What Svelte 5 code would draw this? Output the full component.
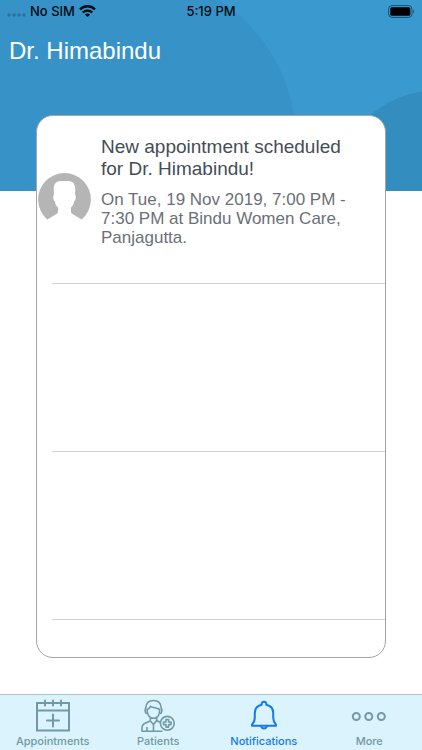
<script lang="ts">
  type Tab = "appointments" | "patients" | "notifications" | "more";

  const tabs: { id: Tab; label: string }[] = [
    { id: "appointments", label: "Appointments" },
    { id: "patients", label: "Patients" },
    { id: "notifications", label: "Notifications" },
    { id: "more", label: "More" },
  ];

  const notifications = [
    {
      title: "New appointment scheduled for Dr. Himabindu!",
      body: "On Tue, 19 Nov 2019, 7:00 PM - 7:30 PM at Bindu Women Care, Panjagutta.",
    },
    null,
    null,
  ];

  let active: Tab = $state("notifications");
</script>

<div class="app">
  <header>
    <svg class="backdrop" viewBox="0 0 422 191" preserveAspectRatio="xMaxYMin slice" aria-hidden="true">
      <path d="M0 0H219A166 166 0 0 1 288 191H0Z" fill="#3793c7" />
      <circle cx="440" cy="200" r="110" fill="#338dbe" />
    </svg>

    <div class="status">
      <div class="carrier">
        <svg width="19" height="12" viewBox="0 0 19 12" fill="#2c729b">
          <circle cx="2" cy="10" r="1.8" />
          <circle cx="7" cy="10" r="1.8" />
          <circle cx="12" cy="10" r="1.8" />
          <circle cx="17" cy="10" r="1.8" />
        </svg>
        <span>No SIM</span>
        <svg width="17" height="12" viewBox="0 0 17 12" fill="none" stroke="#050b10" stroke-width="2.3">
          <path d="M1 4.400C5.200.2 11.800.2 16 4.400" />
          <path d="M3.700 7.500c2.700-2.600 6.900-2.600 9.600 0" />
          <path d="M5.900 9.500c1.600-1.400 3.600-1.400 5.200 0L8.500 12Z" fill="#050b10" stroke="none" />
        </svg>
      </div>
      <time>5:19 PM</time>
      <svg class="battery" width="27" height="13" viewBox="0 0 27 13">
        <rect x=".6" y=".6" width="23.4" height="11.8" rx="3.5" fill="none" stroke="#1d4d69" />
        <rect x="2.3" y="2.3" width="20" height="8.4" rx="1.5" fill="#000" />
        <path d="M25.300 4.500v4c1.200-.5 1.200-3.500 0-4Z" fill="#1d4d69" />
      </svg>
    </div>

    <h1>Dr. Himabindu</h1>
  </header>

  <main>
    <ul>
      {#each notifications as item}
        <li>
          {#if item}
            <svg class="avatar" viewBox="0 0 53 53" aria-hidden="true">
              <path
                fill="#b5b5b5"
                d="M9.3 46.500A26.400 26.400 0 1 1 43.700 46.500L34.500 41C33 40 32.500 37.500 33 34.500C34.800 33 35.800 31 36 28.500C38 27.500 38.200 23 37 21C37.700 14 37.500 8 30 8H23C15.500 8 15.300 14 16 21C14.800 23 15 27.500 17 28.500C17.200 31 18.200 33 20 34.500C20.500 37.500 20 40 18.500 41Z"
              />
            </svg>
            <div class="text">
              <h2>{item.title}</h2>
              <p>{item.body}</p>
            </div>
          {/if}
        </li>
      {/each}
    </ul>
  </main>

  <nav>
    {#each tabs as tab}
      <button class:active={active === tab.id} onclick={() => (active = tab.id)}>
        <svg width="36" height="36" viewBox="0 0 36 36" fill="none" stroke="currentColor" stroke-width="2" aria-hidden="true">
          {#if tab.id === "appointments"}
            <path d="M2 5H34V32.500H2ZM2 12.500H34" />
            <path d="M10 2.500V7.500M18 2.500V7.500M26 2.500V7.500M18 16.500V28.500M12 22.500H24" stroke-linecap="round" />
          {:else if tab.id === "patients"}
            <g stroke-width="1.6" stroke-linejoin="round">
              <path d="M6.500 16C4.500 13.500 5 11.500 5.800 10C6 5 9 2.500 13.500 2.500S21 5 21.200 10C22 11.500 22.500 13.500 20.500 16" />
              <path d="M7.200 11.500C8.800 11 10 9.500 10.500 8.300C13 10 17 9.500 19.600 11.500C20 17 17.500 20.300 13.500 20.300S7 17 7.200 11.500Z" />
              <path d="M10.300 20V23L5.500 25C3 26 2 27.500 2 30V33.200H22.500M16.700 20V22.500L20.500 24.500M10.300 23L13.500 26.500L16.700 22.500M13.500 26.500V33M7 29V33" />
              <circle cx="27.300" cy="25.300" r="6.900" />
              <path d="M26 21.500h2.600v2.500h2.500v2.600h-2.500v2.500H26v-2.500h-2.500V24H26Z" />
            </g>
          {:else if tab.id === "notifications"}
            <path d="M15.700 6.800A2.400 2.400 0 1 1 20.300 6.800C25 7.800 27.200 11 27.200 15V19.500C27.200 22.500 28 24.500 30 26.700V27.800H6V26.700C8 24.500 8.800 22.500 8.800 19.500V15C8.800 11 11 7.800 15.700 6.800Z" stroke-linejoin="round" />
            <path d="M15 28.300a3.100 2.800 0 0 0 6 0" />
          {:else}
            <circle cx="5.300" cy="18.500" r="3.500" />
            <circle cx="17.800" cy="18.500" r="3.500" />
            <circle cx="30.300" cy="18.500" r="3.500" />
          {/if}
        </svg>
        <span>{tab.label}</span>
      </button>
    {/each}
  </nav>
</div>

<style>
  :global(body) {
    margin: 0;
    background: #fff;
  }
  .app {
    min-height: 100vh;
    display: flex;
    flex-direction: column;
    font-family: "Liberation Sans", Arial, sans-serif;
  }
  header {
    position: relative;
    height: 191px;
    background: #3a9acf;
    color: #fff;
  }
  .backdrop {
    position: absolute;
    inset: 0;
    width: 100%;
    height: 100%;
  }
  .status {
    position: relative;
    display: grid;
    grid-template-columns: 1fr auto 1fr;
    align-items: center;
    height: 22px;
    padding: 0 7px;
    color: #050b10;
    font: 500 13px/22px Inter, sans-serif;
  }
  .carrier {
    display: flex;
    align-items: center;
    gap: 4px;
  }
  .battery {
    justify-self: end;
  }
  h1 {
    position: relative;
    margin: 0;
    padding: 14px 9px;
    font-size: 24px;
    font-weight: 400;
    line-height: 30px;
  }
  main {
    position: relative;
    flex: 1;
    margin: -76px 36px 36px;
    border: 1px solid #a5a5a5;
    border-radius: 17px;
    background: #fff;
    overflow: hidden;
  }
  ul {
    margin: 0;
    padding: 0;
    list-style: none;
  }
  li {
    display: flex;
    align-items: center;
    gap: 10px;
    min-height: 168px;
    box-sizing: border-box;
    border-bottom: 1px solid;
    border-image: linear-gradient(to right, transparent 16px, #d2d2d2 16px) 1;
  }
  .avatar {
    flex: none;
    width: 53px;
    height: 53px;
    margin-left: 1px;
  }
  .text {
    flex: 1;
    padding: 0 28px 16px 0;
  }
  h2 {
    margin: 0 0 10px;
    font-size: 19px;
    font-weight: 400;
    line-height: 22px;
    color: #454d56;
  }
  p {
    margin: 0;
    font-size: 17px;
    line-height: 19px;
    color: #6b7077;
  }
  nav {
    display: grid;
    grid-template-columns: repeat(4, 1fr);
    border-top: 1px solid #b2c1c8;
    background: #daf3fd;
  }
  button {
    display: flex;
    flex-direction: column;
    align-items: center;
    height: 55px;
    padding: 3px 0 0;
    border: 0;
    background: none;
    color: #7299a5;
    font: 500 11px/14px Inter, sans-serif;
    cursor: pointer;
  }
  button.active {
    color: #147aea;
  }
</style>
